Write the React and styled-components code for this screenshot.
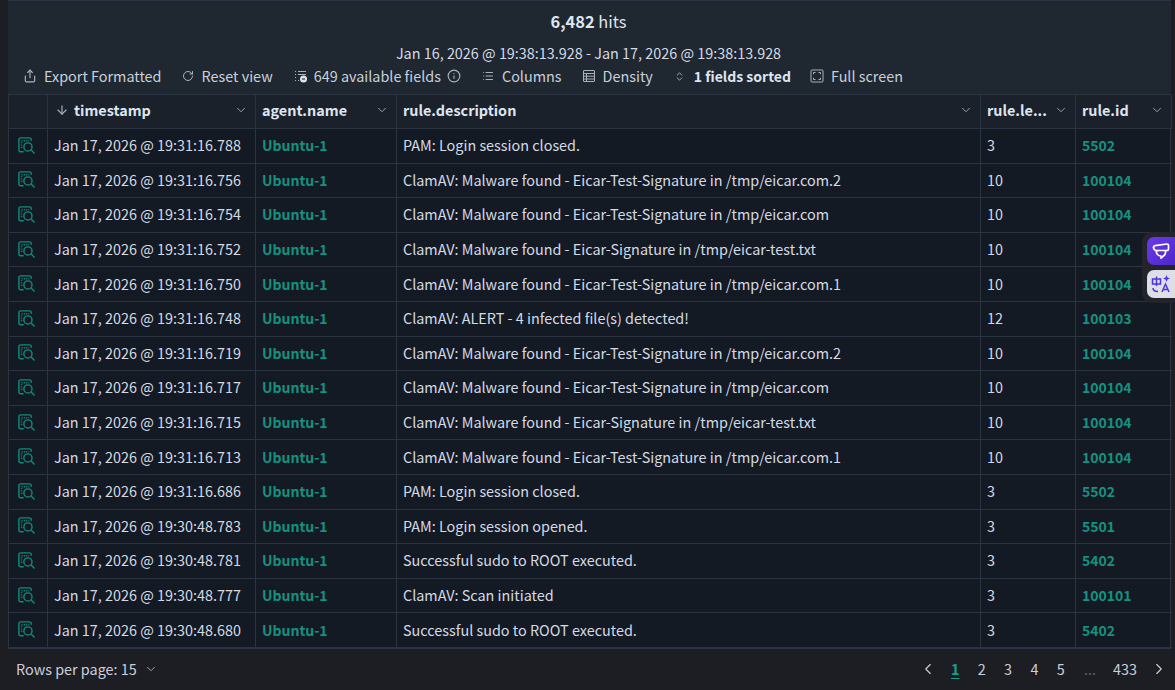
import React from 'react';
import styled, { createGlobalStyle } from 'styled-components';
import {
  ArrowDown,
  ChevronDown,
  ChevronLeft,
  ChevronRight,
  ChevronsUpDown,
  Info,
  List,
  RotateCw,
  Share,
} from 'lucide-react';

const GlobalStyle = createGlobalStyle`
  html, body {
    margin: 0;
    padding: 0;
    background: #1d1e24;
  }
  body {
    font-family: "Noto Sans CJK JP", "Noto Sans", sans-serif;
    color: #dfe5ef;
  }
`;

const Page = styled.div`
  position: relative;
  width: 1175px;
  height: 690px;
  overflow: hidden;
  background: #1d1e24;
  padding-left: 8px;
  box-sizing: border-box;
`;

const TopPanel = styled.div`
  width: 1163px;
  height: 94px;
  background: #1f2731;
  border-top: 1px solid #2b3744;
  box-sizing: border-box;
  display: flex;
  flex-direction: column;
`;

const Hits = styled.div`
  height: 39px;
  padding-top: 7px;
  box-sizing: border-box;
  text-align: center;
  font-size: 16.4px;
  line-height: 26px;
  margin-right: 2px;
  b { font-weight: 700; }
`;

const DateRange = styled.div`
  margin-top: 3px;
  text-align: center;
  font-size: 14.4px;
  line-height: 20px;
  color: #d4dae5;
  margin-right: 2px;
`;

const Toolbar = styled.div`
  display: flex;
  align-items: center;
  height: 24px;
  margin-top: 1px;
  padding-left: 15px;
  font-size: 14.4px;
  line-height: 20px;
  color: #c9d0db;
`;

const ToolButton = styled.div`
  display: flex;
  align-items: center;
  gap: ${(p) => p.$gap || 8}px;
  margin-right: ${(p) => p.$after || 21}px;
  font-size: ${(p) => (p.$bold ? 14 : 14.4)}px;
  font-weight: ${(p) => (p.$bold ? 700 : 400)};
  color: ${(p) => (p.$bold ? '#dfe5ef' : '#c9d0db')};
  white-space: nowrap;
  svg { flex: none; color: #aab2bf; }
`;

const Table = styled.div`
  width: 1163px;
  height: 555px;
  display: grid;
  grid-template-columns: 39px 208px 141px 584px 95px 96px;
  grid-template-rows: 34px repeat(15, 1fr);
  background: #141a24;
  border: 1px solid #2b3440;
  box-sizing: border-box;
`;

const HeadCell = styled.div`
  display: flex;
  align-items: center;
  justify-content: space-between;
  background: #1a212b;
  padding: 0 7px 4px ${(p) => p.$pad || 6}px;
  border-right: 1px solid #2b3440;
  border-bottom: 1px solid #2b3440;
  font-size: 14.4px;
  line-height: 20px;
  font-weight: 700;
  color: #dfe5ef;
  white-space: nowrap;
  min-width: 0;
  &:last-child { border-right: 0; }
  svg { flex: none; color: #aab2bf; }
`;

const HeadLabel = styled.span`
  display: flex;
  align-items: center;
  gap: 5px;
`;

const Cell = styled.div`
  display: flex;
  align-items: center;
  padding: 0 0 1px ${(p) => p.$pad || 6}px;
  border-right: 1px solid #2b3440;
  border-bottom: 1px solid #2b3440;
  font-size: ${(p) => (p.$link ? 14 : 14.4)}px;
  line-height: 20px;
  color: ${(p) => (p.$link ? '#16917f' : '#d4dae5')};
  font-weight: ${(p) => (p.$link ? 700 : 400)};
  white-space: nowrap;
  min-width: 0;
  &:nth-child(6n) { border-right: 0; }
`;

const IconCell = styled(Cell)`
  padding-left: 8px;
`;

const Footer = styled.div`
  display: flex;
  align-items: center;
  justify-content: space-between;
  height: 40px;
  width: 1160px;
  padding-left: 8px;
  box-sizing: border-box;
  font-size: 14.4px;
  line-height: 20px;
  color: #c9d0db;
`;

const RowsPicker = styled.div`
  display: flex;
  align-items: center;
  gap: 7px;
  svg { color: #aab2bf; }
`;

const Pager = styled.div`
  display: flex;
  align-items: center;
  svg { color: #c9d0db; }
`;

const PageNum = styled.span`
  width: 26.4px;
  text-align: center;
  color: ${(p) => (p.$active ? '#16a08c' : '#c9d0db')};
  font-weight: ${(p) => (p.$active ? 700 : 400)};
  text-decoration: ${(p) => (p.$active ? 'underline' : 'none')};
  text-underline-offset: 3px;
`;

const PrevWrap = styled.span`
  display: flex;
  margin-right: 5px;
`;

const Ellipsis = styled.span`
  width: 32px;
  text-align: center;
  color: #5a616c;
`;

const LastPage = styled.span`
  width: 38px;
  text-align: center;
  margin-right: 6px;
`;

const SideDock = styled.div`
  position: absolute;
  right: 0;
  top: 232px;
  width: 33px;
  height: 71px;
  background: #23242c;
  border-radius: 10px 0 0 10px;
  display: flex;
  flex-direction: column;
  align-items: flex-end;
  justify-content: center;
  gap: 5px;
`;

const DockButton = styled.div`
  width: 28px;
  height: 28px;
  border-radius: 7px 0 0 7px;
  background: ${(p) => (p.$light ? '#dedee6' : 'linear-gradient(135deg, #6a3bea, #4f26c8)')};
  display: flex;
  align-items: center;
  justify-content: center;
`;

const DocIcon = () => (
  <svg width="19" height="19" viewBox="0 0 20 20" fill="none" stroke="#128a7a" strokeWidth="1.5">
    <path d="M2 12.500V4a2 2 0 0 1 2-2h9a2 2 0 0 1 2 2v1" />
    <path d="M2 12.500V15a1.500 1.500 0 0 0 1.500 1.500H7" />
    <path d="M4.800 5h8" strokeDasharray="1.200 1.200" />
    <path d="M4.800 6.500v6" strokeDasharray="1.200 1.200" />
    <circle cx="11.500" cy="11.500" r="4.300" />
    <path d="M14.800 14.800l3.700 3.700" />
  </svg>
);

const FieldsIcon = () => (
  <svg width="14" height="14" viewBox="0 0 14 14" fill="none" stroke="#aab2bf" strokeWidth="1.1">
    <path d="M1 2.500h1M4 2.500h8M1 5.500h1M4 5.500h8M1 8.500h1M1 11.500h1M4 11.500h1" />
    <circle cx="9.500" cy="10" r="3.500" fill="#dfe5ef" stroke="none" />
    <path d="M8 10h3" stroke="#1f2731" />
  </svg>
);

const DensityIcon = () => (
  <svg width="14" height="14" viewBox="0 0 14 14" fill="none" stroke="#aab2bf" strokeWidth="1">
    <rect x="1.500" y="1.500" width="11" height="11" rx="0.500" />
    <path d="M1.500 4.500h11M1.500 7.200h11M1.500 10h11M4.500 4.500v8" />
  </svg>
);

const FullScreenIcon = () => (
  <svg width="14" height="14" viewBox="0 0 14 14" fill="none" stroke="#aab2bf" strokeWidth="1">
    <rect x="1" y="1" width="12" height="12" rx="1" />
    <path d="M3.500 5.200V3.500h2M8.500 3.500h2v1.700M10.500 8.800v1.700h-2M5.500 10.500h-2V8.800" />
  </svg>
);

const ChatIcon = () => (
  <svg width="20" height="20" viewBox="0 0 20 20" fill="none" stroke="#fff" strokeWidth="1.700" strokeLinejoin="round" strokeLinecap="round">
    <path d="M2.500 6.500c0-1 .7-1.700 1.600-1.800L15.800 3c1-.1 1.700.6 1.700 1.500v3.300c0 1-.7 1.700-1.700 1.700H7" />
    <path d="M2.500 6.500C2.500 8.500 4.500 10 7 9.500" />
    <path d="M5.500 9.800c-.5 3 1.500 5.200 4.500 5.200v2.200l3.500-3.200c.7-.7 1-1.600 1-2.500V9.500" />
  </svg>
);

const TranslateIcon = () => (
  <svg width="22" height="22" viewBox="0 0 22 22" fill="none" stroke="#4a35e0" strokeWidth="1.500">
    <path d="M2.500 6h8v5h-8zM6.500 3.500V13" />
    <path d="M3 15c0 2.500 1.500 3.500 5 3.500" />
    <path d="M12 19l3.500-8 3.500 8M13.200 16.500h4.600" />
    <path d="M16.500 2l1 2.500L20 5.500l-2.500 1-1 2.500-1-2.500L13 5.500l2.500-1z" fill="#4a35e0" stroke="none" />
  </svg>
);

const rows = [
  ['Jan 17, 2026 @ 19:31:16.788', 'PAM: Login session closed.', '3', '5502'],
  ['Jan 17, 2026 @ 19:31:16.756', 'ClamAV: Malware found - Eicar-Test-Signature in /tmp/eicar.com.2', '10', '100104'],
  ['Jan 17, 2026 @ 19:31:16.754', 'ClamAV: Malware found - Eicar-Test-Signature in /tmp/eicar.com', '10', '100104'],
  ['Jan 17, 2026 @ 19:31:16.752', 'ClamAV: Malware found - Eicar-Signature in /tmp/eicar-test.txt', '10', '100104'],
  ['Jan 17, 2026 @ 19:31:16.750', 'ClamAV: Malware found - Eicar-Test-Signature in /tmp/eicar.com.1', '10', '100104'],
  ['Jan 17, 2026 @ 19:31:16.748', 'ClamAV: ALERT - 4 infected file(s) detected!', '12', '100103'],
  ['Jan 17, 2026 @ 19:31:16.719', 'ClamAV: Malware found - Eicar-Test-Signature in /tmp/eicar.com.2', '10', '100104'],
  ['Jan 17, 2026 @ 19:31:16.717', 'ClamAV: Malware found - Eicar-Test-Signature in /tmp/eicar.com', '10', '100104'],
  ['Jan 17, 2026 @ 19:31:16.715', 'ClamAV: Malware found - Eicar-Signature in /tmp/eicar-test.txt', '10', '100104'],
  ['Jan 17, 2026 @ 19:31:16.713', 'ClamAV: Malware found - Eicar-Test-Signature in /tmp/eicar.com.1', '10', '100104'],
  ['Jan 17, 2026 @ 19:31:16.686', 'PAM: Login session closed.', '3', '5502'],
  ['Jan 17, 2026 @ 19:30:48.783', 'PAM: Login session opened.', '3', '5501'],
  ['Jan 17, 2026 @ 19:30:48.781', 'Successful sudo to ROOT executed.', '3', '5402'],
  ['Jan 17, 2026 @ 19:30:48.777', 'ClamAV: Scan initiated', '3', '100101'],
  ['Jan 17, 2026 @ 19:30:48.680', 'Successful sudo to ROOT executed.', '3', '5402'],
];

const headers = ['agent.name', 'rule.description', 'rule.le...', 'rule.id'];

const App = () => (
  <Page>
    <GlobalStyle />
    <TopPanel>
      <Hits>
        <b>6,482</b> hits
      </Hits>
      <DateRange>Jan 16, 2026 @ 19:38:13.928 - Jan 17, 2026 @ 19:38:13.928</DateRange>
      <Toolbar>
        <ToolButton $gap={7} $after={20}>
          <Share size={14} />
          Export Formatted
        </ToolButton>
        <ToolButton>
          <RotateCw size={12} />
          Reset view
        </ToolButton>
        <ToolButton $gap={6}>
          <FieldsIcon />
          649 available fields
          <Info size={14} />
        </ToolButton>
        <ToolButton $after={20}>
          <List size={12} />
          Columns
        </ToolButton>
        <ToolButton $gap={7}>
          <DensityIcon />
          Density
        </ToolButton>
        <ToolButton $bold $gap={9} $after={19}>
          <ChevronsUpDown size={11} />
          1 fields sorted
        </ToolButton>
        <ToolButton $gap={7}>
          <FullScreenIcon />
          Full screen
        </ToolButton>
      </Toolbar>
    </TopPanel>
    <Table>
      <HeadCell />
      <HeadCell $pad={7}>
        <HeadLabel>
          <ArrowDown size={14} />
          timestamp
        </HeadLabel>
        <ChevronDown size={14} strokeWidth={1.5} />
      </HeadCell>
      {headers.map((h) => (
        <HeadCell key={h}>
          {h}
          <ChevronDown size={14} strokeWidth={1.5} />
        </HeadCell>
      ))}
      {rows.map((r) => (
        <React.Fragment key={r[0]}>
          <IconCell>
            <DocIcon />
          </IconCell>
          <Cell>{r[0]}</Cell>
          <Cell $link>Ubuntu-1</Cell>
          <Cell>{r[1]}</Cell>
          <Cell>{r[2]}</Cell>
          <Cell $link>{r[3]}</Cell>
        </React.Fragment>
      ))}
    </Table>
    <Footer>
      <RowsPicker>
        Rows per page: 15
        <ChevronDown size={14} strokeWidth={1.5} />
      </RowsPicker>
      <Pager>
        <PrevWrap>
          <ChevronLeft size={18} strokeWidth={1.5} />
        </PrevWrap>
        <PageNum $active>1</PageNum>
        <PageNum>2</PageNum>
        <PageNum>3</PageNum>
        <PageNum>4</PageNum>
        <PageNum>5</PageNum>
        <Ellipsis>...</Ellipsis>
        <LastPage>433</LastPage>
        <ChevronRight size={18} strokeWidth={1.5} />
      </Pager>
    </Footer>
    <SideDock>
      <DockButton>
        <ChatIcon />
      </DockButton>
      <DockButton $light>
        <TranslateIcon />
      </DockButton>
    </SideDock>
  </Page>
);

export default App;
